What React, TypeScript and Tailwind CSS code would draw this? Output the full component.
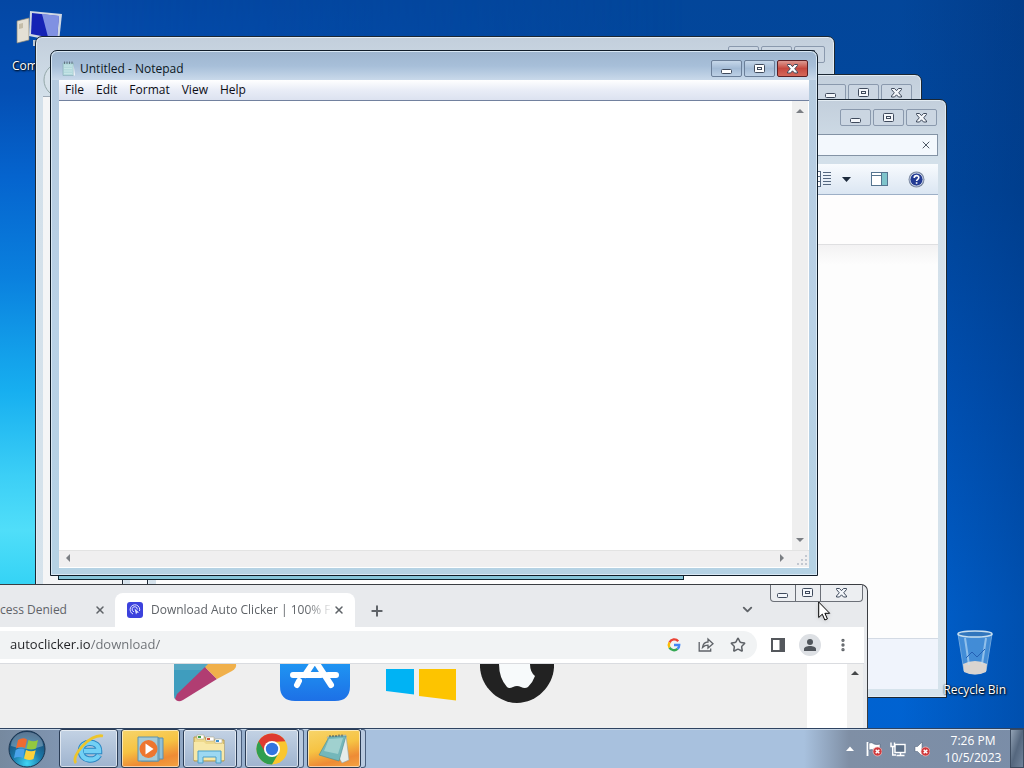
import type { ReactNode } from "react"
import { clsx } from "clsx"
import { ChevronDown, MoreVertical, Plus, Star, X } from "lucide-react"

type CaptionKind = "min" | "max" | "close"

function CaptionGlyph({ kind, white }: { kind: CaptionKind; white?: boolean }) {
  const fill = white ? "#fff" : "#f4f7fb"
  return (
    <svg width="14" height="12" viewBox="0 0 14 12" fill={fill} stroke="#3f4a5c">
      {kind === "min" && <rect x="1.5" y="6.500" width="10" height="4" rx="1" />}
      {kind === "max" && (
        <>
          <rect x="1.5" y="1.500" width="10" height="8" rx="1" />
          <rect x="4.5" y="4.500" width="4" height="2" />
        </>
      )}
      {kind === "close" && (
        <path d="M1.500 1.500h3l2 2.200 2-2.200h3v1L8.700 5.800l2.800 3.200v1h-3l-2-2.200-2 2.200h-3V9l2.800-3.200L1.500 2.500z" />
      )}
    </svg>
  )
}

function CaptionButtons({ active }: { active?: boolean }) {
  const kinds: CaptionKind[] = ["min", "max", "close"]
  const names = { min: "Minimize", max: "Maximize", close: "Close" }
  return (
    <div className="flex gap-0.5">
      {kinds.map((kind) => (
        <button
          key={kind}
          aria-label={names[kind]}
          className={clsx(
            "flex h-[17px] w-[31px] items-center justify-center rounded-[2px] border",
            active && kind === "close"
              ? "border-[#5b1f24] bg-linear-to-b from-[#dc9a93] via-[#c5483f] to-[#d5685a]"
              : active
                ? "border-[#6b7f99] bg-linear-to-b from-[#c6d7e9] via-[#a3bbd6] to-[#bdd0e5]"
                : "border-[#8a99ad] bg-[#cbd6e2]"
          )}
        >
          <CaptionGlyph kind={kind} white={active} />
        </button>
      ))}
    </div>
  )
}

function GlassWindow({ className, children }: { className: string; children?: ReactNode }) {
  return (
    <section
      className={clsx(
        "absolute flex w-[800px] flex-col rounded-t-[7px] border border-[#1b2733] bg-linear-to-b from-[#c3cfdc] via-[#d3e0ea] via-10% to-[#d6e3ec] shadow-[inset_0_0_0_1px_#e3ecf3]",
        className
      )}
    >
      {children}
    </section>
  )
}

function ExplorerWindow() {
  return (
    <GlassWindow className="left-[147px] top-[99px] h-[599px] px-2 pb-2">
      <div className="flex h-[34px] justify-end pt-[9px] pr-px">
        <CaptionButtons />
      </div>
      <div className="flex h-[30px] justify-end">
        <label className="flex h-[22px] w-[240px] items-center border border-[#8393a5] bg-[#f3f8fd] pr-[5px]">
          <input aria-label="Search" className="min-w-0 flex-1 bg-transparent outline-none" />
          <X className="size-3 text-[#4d5865]" strokeWidth={2} />
        </label>
      </div>
      <div className="flex h-[31px] items-center justify-end gap-3 border-b border-[#9dafc6] bg-linear-to-b from-[#f8fbfe] via-[#e9f0f8] to-[#dbe6f2] pr-[13px]">
        <button aria-label="Change your view" className="flex items-center gap-2.5">
          <svg width="20" height="16" viewBox="0 0 20 16" stroke="#55677f" fill="#fff">
            <rect x="1.500" y=".5" width="7" height="5" />
            <rect x="1.500" y="5.500" width="7" height="5" />
            <rect x="1.500" y="10.500" width="7" height="5" />
            <path d="M4 3h2M4 8h2M4 13h2" stroke="#254b98" />
            <path d="M11 1.500h8M11 4.500h8M11 7.500h8M11 10.500h8M11 13.500h8" />
          </svg>
          <svg width="9" height="5" viewBox="0 0 9 5">
            <path d="M0 0h9L4.500 5z" fill="#1d2a3c" />
          </svg>
        </button>
        <button aria-label="Show the preview pane" className="ml-2">
          <svg width="17" height="14" viewBox="0 0 17 14" stroke="#55748f" fill="#fff">
            <rect x=".5" y=".5" width="16" height="13" />
            <path d="M.5 3.500h10" />
            <rect x="10.500" y=".5" width="6" height="13" fill="#7fc4cb" />
          </svg>
        </button>
        <button aria-label="Get help" className="ml-2">
          <svg width="17" height="17" viewBox="0 0 17 17">
            <circle cx="8.500" cy="8.500" r="8" fill="#7d8ba3" />
            <circle cx="8.500" cy="8.500" r="6.500" fill="#233b93" stroke="#c3cde4" />
            <path d="M6.200 7c0-3.200 4.800-3 4.600-.2-.1 1.500-2.200 1.600-2.200 3.200M8.600 11.300v1.500" fill="none" stroke="#fff" strokeWidth="1.600" />
          </svg>
        </button>
      </div>
      <div className="h-[50px] border-b border-[#dfdfe1] bg-[#fefdfd]" />
      <div className="flex-1 bg-linear-to-b from-[#f3f2f3] via-[#fdfdfd] via-5% to-[#fdfdfd]" />
      <div className="h-[51px] border-t border-[#d3dae4] bg-[#f0f4fc]" />
    </GlassWindow>
  )
}

function NotepadIcon() {
  return (
    <svg width="14" height="16" viewBox="0 0 14 16">
      <path d="M1 2h10.500v12.500H1z" fill="#b4dadd" stroke="#86abb5" strokeWidth=".6" />
      <path d="M2 5h8M2 7.500h8M2 10h8M2 12.500h8" stroke="#cfeaea" strokeWidth=".7" />
      <path d="M2.500.5v2.500M5 .5v2.500M7.500.5v2.500M10 .5v2.500" stroke="#53636f" strokeWidth=".8" />
      <path d="M11.500 2.500L13 14.500h-1.500z" fill="#f3f7f8" />
    </svg>
  )
}

function Arrow({ dir }: { dir: "up" | "down" | "left" | "right" }) {
  const paths = { up: "M0 6l4-4 4 4z", down: "M0 2l4 4 4-4z", left: "M6 0v8L2 4z", right: "M2 0v8l4-4z" }
  return (
    <svg width="8" height="8" viewBox="0 0 8 8" fill="#7b7e83">
      <path d={paths[dir]} />
    </svg>
  )
}

function NotepadWindow() {
  const menus = ["File", "Edit", "Format", "View", "Help"]
  return (
    <section className="absolute left-[50px] top-[50px] flex h-[526px] w-[768px] flex-col rounded-t-[7px] border border-[#101c28] bg-linear-to-b from-[#b5cade] via-[#b9d1e6] to-[#b5d2e4] px-2 pb-[7px] shadow-[inset_0_0_0_1px_#d9e8f4]">
      <div className="-mx-[7px] mt-px flex h-7 justify-between rounded-t-[6px] bg-linear-to-b from-[#9fb6cf] via-[#a7bfd9] to-[#c9d9ea] px-[7px]">
        <h1 className="flex items-center gap-1 pt-1.5 pl-[3px] text-xs text-[#0b1722]">
          <NotepadIcon />
          Untitled - Notepad
        </h1>
        <div className="pt-2 pr-px">
          <CaptionButtons active />
        </div>
      </div>
      <nav className="flex h-[21px] items-center border-b border-[#72819f] bg-linear-to-b from-white via-[#e9edf7] via-50% to-[#dce2f0] text-xs text-[#0c0c14]">
        {menus.map((menu) => (
          <button key={menu} className="pr-1.5 pl-1.5">
            {menu}
          </button>
        ))}
      </nav>
      <div className="flex flex-1 bg-white">
        <textarea aria-label="Document text" spellCheck={false} className="flex-1 resize-none bg-white p-1 font-mono text-sm outline-none" />
        <div className="mr-px flex w-4 flex-col items-center justify-between bg-[#efefef] py-1.5">
          <Arrow dir="up" />
          <Arrow dir="down" />
        </div>
      </div>
      <div className="flex h-[18px] items-start justify-between border-t border-b border-t-[#e3e3e3] border-b-white bg-[#f0eff0] pt-[3px] pr-px pl-[5px]">
        <Arrow dir="left" />
        <div className="flex items-start gap-2.5">
          <Arrow dir="right" />
          <svg width="12" height="12" viewBox="0 0 12 12" fill="#c3c8d1">
            <path d="M9 1h2v2H9zM9 5h2v2H9zM9 9h2v2H9zM5 5h2v2H5zM5 9h2v2H5zM1 9h2v2H1z" />
          </svg>
        </div>
      </div>
    </section>
  )
}

function PlayLogo() {
  return (
    <svg width="64" height="38" viewBox="0 0 64 38">
      <path d="M0 0h35L1 35q-1-1-1-4z" fill="#3f9dbe" />
      <path d="M0 0h35l-4 6H0z" fill="#54a7c3" />
      <path d="M31 3l12 12L9 36q-5 3-8-1l2-5z" fill="#b13d72" />
      <path d="M34 0h28q1 4-4 7l-15 8L31 3z" fill="#f0b04b" />
    </svg>
  )
}

function AppStoreLogo() {
  return (
    <svg width="70" height="38" viewBox="0 0 70 38">
      <defs>
        <linearGradient id="store" x1="0" y1="0" x2="0" y2="1">
          <stop offset="0" stopColor="#1f94f2" />
          <stop offset="1" stopColor="#1d70e6" />
        </linearGradient>
      </defs>
      <path d="M0 0h70v22q0 15-15 15H15Q0 37 0 22z" fill="url(#store)" />
      <g stroke="#fff" strokeWidth="6" strokeLinecap="round">
        <path d="M35-4L25 11M19 17l-2 4M36-2l15 23M13 11h28M48 11h8" />
      </g>
    </svg>
  )
}

function ChromeWindow() {
  return (
    <section className="absolute bottom-10 left-0 flex h-36 w-[868px] flex-col rounded-tr-[7px] border-t border-r border-[#3a3d42] bg-[#e8eaed]">
      <div className="flex h-[42px] items-end text-[#5f6368]">
        <div className="flex h-[34px] w-[115px] shrink-0 items-center justify-between overflow-hidden pr-[9px] text-xs">
          <button className="whitespace-nowrap">cess Denied</button>
          <button aria-label="Close tab">
            <X className="size-3" strokeWidth={3} />
          </button>
        </div>
        <div className="flex h-[34px] w-[240px] shrink-0 items-center rounded-t-lg bg-white pr-2.5 pl-3 text-xs">
          <svg width="16" height="16" viewBox="0 0 16 16" fill="none" stroke="#dfe3ff" className="shrink-0">
            <rect width="16" height="16" rx="3" fill="#3c42dd" stroke="none" />
            <path d="M6 12A4.800 4.800 0 1 1 12.500 9M7 9.800A2.600 2.600 0 1 1 10.300 7.500" />
            <path d="M7.500 6.500l4.500 4-2 .2-1 1.800z" fill="#dfe3ff" stroke="none" />
          </svg>
          <button className="ml-2 min-w-0 flex-1 mask-r-from-85% text-left whitespace-nowrap">
            Download Auto Clicker | 100% Fr
          </button>
          <button aria-label="Close tab" className="shrink-0">
            <X className="size-3" strokeWidth={3} />
          </button>
        </div>
        <button aria-label="New tab" className="mb-2 ml-3.5">
          <Plus className="size-4" strokeWidth={3} />
        </button>
        <button aria-label="Search tabs" className="mb-2.5 ml-auto mr-[15px]">
          <ChevronDown className="size-[15px]" strokeWidth={3} />
        </button>
        <div className="mr-1 flex h-[17px] w-[93px] self-start rounded-b-[4px] border border-t-0 border-[#6c7078] bg-[#eceef1]">
          <button aria-label="Minimize" className="flex w-[25px] items-center justify-center border-r border-[#6c7078]">
            <CaptionGlyph kind="min" />
          </button>
          <button aria-label="Maximize" className="flex w-[25px] items-center justify-center border-r border-[#6c7078]">
            <CaptionGlyph kind="max" />
          </button>
          <button aria-label="Close" className="flex flex-1 items-center justify-center">
            <CaptionGlyph kind="close" />
          </button>
        </div>
      </div>
      <div className="mr-[3px] flex h-[37px] items-center border-b border-[#dadce0] bg-white text-[#5f6368]">
        <div className="flex h-7 flex-1 items-center gap-4 rounded-r-full bg-[#f1f3f4] pr-[11px] pl-2.5">
          <input
            aria-label="Address"
            defaultValue="autoclicker.io/download/"
            className="min-w-0 flex-1 bg-[linear-gradient(90deg,#202124_81px,#6b6f74_81px)] bg-clip-text text-[13px] text-transparent outline-none"
          />
          <button aria-label="Search with Google">
            <svg width="16" height="16" viewBox="0 0 16 16" fill="none" strokeWidth="2.400">
              <path d="M12.200 4.200A5.200 5.200 0 0 0 3.500 5.400" stroke="#ea4335" />
              <path d="M3.500 5.400a5.200 5.200 0 0 0 0 5.200" stroke="#fbbc05" />
              <path d="M3.500 10.600a5.200 5.200 0 0 0 8 1.300" stroke="#34a853" />
              <path d="M11.500 11.900A5 5 0 0 0 13.200 8H8" stroke="#4285f4" />
            </svg>
          </button>
          <button aria-label="Share this page">
            <svg width="16" height="16" viewBox="0 0 16 16" fill="none" stroke="currentColor" strokeWidth="1.300">
              <path d="M1.200 5v9h11.500v-2.500M4.500 10.500C5 7 7 5 10 5V2l5 4.700L10 11V8.200C7.500 8.200 6 9 4.500 10.500z" />
            </svg>
          </button>
          <button aria-label="Bookmark this tab">
            <Star className="size-4" strokeWidth={2.300} />
          </button>
        </div>
        <button aria-label="Side panel" className="ml-[14px]">
          <svg width="14" height="14" viewBox="0 0 14 14">
            <rect x="1" y="1" width="12" height="12" fill="none" stroke="#54575c" strokeWidth="2" />
            <path d="M8.500 1H13v12H8.500z" fill="#54575c" />
          </svg>
        </button>
        <button aria-label="You" className="ml-3.5 flex size-[22px] items-center justify-center rounded-full bg-[#dde0e4]">
          <svg width="14" height="14" viewBox="0 0 14 14" fill="#50555b">
            <circle cx="7" cy="4" r="3" />
            <path d="M1 13v-2c0-4 12-4 12 0v2z" />
          </svg>
        </button>
        <button aria-label="Customize and control" className="ml-3.5 mr-[13px]">
          <MoreVertical className="size-4" strokeWidth={3} />
        </button>
      </div>
      <main className="mr-1 flex flex-1 bg-[#efefef]">
        <div className="flex flex-1 items-start pl-[174px]">
          <a href="#android" aria-label="Android">
            <PlayLogo />
          </a>
          <a href="#ios" aria-label="iOS" className="ml-[42px]">
            <AppStoreLogo />
          </a>
          <a href="#windows" aria-label="Windows" className="ml-9">
            <svg width="71" height="38" viewBox="0 0 71 38">
              <path d="M0 5h28v25.500L0 27z" fill="#00b3f4" />
              <path d="M33 5h37v31.500L33 32z" fill="#fdc400" />
            </svg>
          </a>
          <a href="#mac" aria-label="macOS" className="ml-[23px]">
            <svg width="74" height="40" viewBox="0 0 74 40">
              <path d="M0 0h74C75 20 58 39 37 39S-1 20 0 0z" fill="#222" />
              <path d="M19 0h31q0 8 5 12-2 6-7 11-3 2-7 0-4-2-8 0-4 2-6 0Q19 14 19 0z" fill="#f7fafb" />
            </svg>
          </a>
        </div>
        <div className="w-10 bg-white" />
        <div className="flex w-4 justify-center bg-[#f0f0f0] pt-[5px]">
          <svg width="8" height="8" viewBox="0 0 8 8">
            <path d="M0 6l4-4 4 4z" fill="#454749" />
          </svg>
        </div>
      </main>
    </section>
  )
}

function ErrorBadge() {
  return (
    <>
      <circle cx="11.500" cy="10.500" r="4.500" fill="#d0393c" stroke="#f3c6c6" strokeWidth=".7" />
      <path d="M9.700 8.700l3.600 3.600M13.300 8.700l-3.600 3.600" stroke="#fff" strokeWidth="1.500" />
    </>
  )
}

function TaskButton({ label, lit, stacked, children }: { label: string; lit?: boolean; stacked?: boolean; children: ReactNode }) {
  return (
    <div className="flex h-full">
      <button
        aria-label={label}
        className={clsx(
          "flex h-full items-center justify-center rounded-[3px] border border-[#2a3c55] shadow-[inset_0_0_0_1px_#ffffff90]",
          stacked ? "w-[54px]" : "w-[59px]",
          lit ? "bg-[linear-gradient(165deg,#f7d56b_0%,#f6c343_45%,#ee8b35_75%,#f4a341_100%)]" : "bg-linear-to-b from-[#c3d2e4] to-[#9fb4cf]"
        )}
      >
        {children}
      </button>
      {stacked && <div className="w-[5px] rounded-r-[3px] border-y border-r border-[#4a5f7d] bg-[#b9cadf]" />}
    </div>
  )
}

function ChromeLogo() {
  return (
    <svg width="32" height="32" viewBox="0 0 32 32">
      <circle cx="16" cy="16" r="15.500" fill="#f9c62f" />
      <path d="M16 16L2.600 8.200A15.500 15.500 0 0 0 16 31.500l7-12z" fill="#2f9e4f" />
      <path d="M2.600 8.200A15.500 15.500 0 0 1 29.400 8.200L16 9 9.500 19.700z" fill="#de3b30" />
      <circle cx="16" cy="16" r="8" fill="#fff" />
      <circle cx="16" cy="16" r="6.200" fill="#3374e0" />
    </svg>
  )
}

function Taskbar() {
  return (
    <footer className="absolute inset-x-0 bottom-0 flex h-10 items-stretch border-t border-[#2e4361] bg-[linear-gradient(90deg,#76899f_0px,#8095b1_60px,#a8c1de_360px,#a8c1de_calc(100%_-_220px),#7f8fa5_calc(100%_-_175px),#7a8da8_100%)] shadow-[inset_0_1px_0_#c5d5e6]">
      <button aria-label="Start" className="flex w-[59px] items-center pl-2">
        <svg width="38" height="38" viewBox="0 0 38 38">
          <defs>
            <radialGradient id="orb" cx=".5" cy=".9" r=".9">
              <stop offset="0" stopColor="#3fd6f5" />
              <stop offset=".45" stopColor="#1a78a8" />
              <stop offset="1" stopColor="#1c3d63" />
            </radialGradient>
          </defs>
          <circle cx="19" cy="19" r="18" fill="url(#orb)" stroke="#1b3550" />
          <path d="M3 16a16 14 0 0 1 32 0q-16 6-32 0z" fill="#fff" opacity=".28" />
          <path d="M10 10q5-3 9-.5L17 18q-4-2-9 .5z" fill="#ee6b31" />
          <path d="M20.500 10q5 2.500 9.500 0L28 18.500q-5 2-9.500 0z" fill="#93c83f" />
          <path d="M7.700 20q4.500-2.500 9-.5L15 28q-4-2-9 0z" fill="#4aa3ea" />
          <path d="M18 20q5 2.500 9.700.3L25.500 29q-5 2-9.500-.5z" fill="#fbd13b" />
        </svg>
      </button>
      <nav className="flex gap-[3px]">
        <TaskButton label="Internet Explorer">
          <svg width="34" height="32" viewBox="0 0 34 32" fill="none">
            <path d="M27 22c-4 7-18 6-18-4 0-11 18-11 18 0H12" stroke="#2b86c2" strokeWidth="6.500" />
            <path d="M27 22c-4 7-18 6-18-4 0-11 18-11 18 0H12" stroke="#72d0f5" strokeWidth="4.500" />
            <path d="M4 30C-2 24 18 0 31 3" stroke="#edc52c" strokeWidth="2.800" />
          </svg>
        </TaskButton>
        <TaskButton label="Windows Media Player" lit>
          <svg width="28" height="28" viewBox="0 0 28 28">
            <path d="M7 3h19v21H7z" fill="#8fc0d8" stroke="#5c8fae" />
            <path d="M4 3h18v23H4z" fill="#a9d3e6" stroke="#5c8fae" />
            <path d="M1 2h20v24H1z" fill="#a5cbd8" stroke="#5c93ac" />
            <circle cx="11.500" cy="14" r="9" fill="#ee762f" />
            <path d="M8.500 8.500l8 5.500-8 5.500z" fill="#fff" />
          </svg>
        </TaskButton>
        <TaskButton label="Windows Explorer" stacked>
          <svg width="34" height="32" viewBox="0 0 34 32">
            <path d="M1 4h11l1 3h18v21H1z" fill="#eed98c" stroke="#b89c4d" />
            <path d="M4 2h7v4H4zM13 4h8v4h-8zM22 6h7v4h-7z" fill="#fff" stroke="#b4a983" strokeWidth=".6" />
            <path d="M5 3h3v2H5z" fill="#3fa04b" />
            <path d="M14 5h3v2h-3z" fill="#d34e3a" />
            <path d="M23 7h3v2h-3z" fill="#3a91cc" />
            <path d="M1 9h10l2 2h18v16H1z" fill="#f8e8a8" />
            <path d="M5 30V18h23v12h-5v-6H10v6z" fill="#9cd8f2" stroke="#4a9fc8" />
          </svg>
        </TaskButton>
        <TaskButton label="Google Chrome" stacked>
          <ChromeLogo />
        </TaskButton>
        <TaskButton label="Notepad" lit stacked>
          <svg width="34" height="30" viewBox="0 0 34 30">
            <path d="M10 3L29 1l3 25-7 3z" fill="#e5ecea" stroke="#90a3a4" strokeWidth=".6" />
            <path d="M12 3l17-1-7 25-20-6z" fill="#74b7ba" stroke="#4c8c92" strokeWidth=".6" />
            <path d="M12 5l14-1-5 16-14-3z" fill="#b4dcd9" opacity=".7" />
            <path d="M13 3v-2M16 3v-2M19 3v-2M22 2.500v-2M25 2.500v-2" stroke="#3e5459" />
          </svg>
        </TaskButton>
      </nav>
      <div className="ml-auto flex items-center gap-2">
        <button aria-label="Show hidden icons" className="mr-1">
          <svg width="8" height="5" viewBox="0 0 8 5">
            <path d="M0 5l4-4.500L8 5z" fill="#fff" />
          </svg>
        </button>
        <button aria-label="Action Center">
          <svg width="16" height="16" viewBox="0 0 16 16">
            <path d="M1.500 1v14" stroke="#fff" strokeWidth="1.800" />
            <path d="M3 2q3-1 5 1 3 1 6 0v7q-3 1-5.500-.5T3 9z" fill="#fff" stroke="#40516a" strokeWidth=".5" />
            <ErrorBadge />
          </svg>
        </button>
        <button aria-label="Network">
          <svg width="16" height="16" viewBox="0 0 16 16" fill="none" stroke="#fff" strokeWidth="1.400">
            <rect x="5" y="3.500" width="10" height="8" fill="#5d7088" />
            <path d="M6.500 14.500h8M10.500 12v2.500M1 1.500v4h3.500v-4M2.700 5.500V14H6" />
          </svg>
        </button>
        <button aria-label="Volume">
          <svg width="16" height="16" viewBox="0 0 16 16">
            <path d="M1 5.500h2.500L8 1v14l-4.500-4.500H1z" fill="#fff" stroke="#4a5b73" strokeWidth=".5" />
            <ErrorBadge />
          </svg>
        </button>
        <time className="ml-1.5 w-[58px] text-center text-xs leading-[17px] whitespace-nowrap text-white">
          7:26 PM
          <br />
          10/5/2023
        </time>
        <button aria-label="Show desktop" className="h-full w-[14px] border border-[#3d4c60] bg-linear-to-br from-[#93a3b5] via-[#55677e] to-[#71839a]" />
      </div>
    </footer>
  )
}

function DesktopIcon({ label, className, children }: { label: string; className: string; children: ReactNode }) {
  return (
    <a
      href="#open"
      className={clsx("absolute flex flex-col items-center text-xs whitespace-nowrap text-white [text-shadow:1px_1px_2px_#000,0_0_2px_#000]", className)}
    >
      {children}
      <span className="mt-1">{label}</span>
    </a>
  )
}

export default function App() {
  return (
    <div className="relative h-screen w-full overflow-hidden bg-[linear-gradient(180deg,#03469a_0%,#00489f_25%,#0053b8_50%,#0063d2_80%,#0062d0_100%)] font-['Open_Sans','Noto_Sans',sans-serif]">
      <div className="absolute inset-0 bg-[linear-gradient(90deg,transparent_88%,#002a6a55_100%)]" />
      <div className="absolute inset-y-0 left-0 w-2/3 bg-[linear-gradient(180deg,#0447a4_0%,#044fb4_12%,#0564ce_23%,#0a80de_36%,#17aff0_51%,#3ccff6_62%,#50def9_69%,#35d3f5_76%)] mask-r-from-10%" />

      <DesktopIcon label="Computer" className="left-3 top-2.5">
        <svg width="54" height="44" viewBox="0 0 54 44">
          <path d="M4 11l12-3v22L4 33z" fill="#e4e0d5" stroke="#8a8576" strokeWidth=".7" />
          <path d="M6 14l4-1v5l-4 1z" fill="#c4bda9" />
          <path d="M17 1l32 3-3 28-30-6z" fill="#ced7e4" />
          <path d="M19 3l27 3-2 23-26-5z" fill="#1523b5" />
          <path d="M29 4l17 2-2 23-9-2z" fill="#9badee" opacity=".8" />
          <path d="M20 30h10v6H20z" fill="#bcc8d6" />
        </svg>
      </DesktopIcon>
      <GlassWindow className="left-[35px] top-[36px] h-[600px] px-[7px]">
        <div className="flex h-[60px] justify-between border-b border-[#9da9b5] pt-[9px]">
          <svg width="36" height="50" viewBox="0 0 36 50">
            <circle cx="18" cy="34" r="17" fill="#d6e1e9" stroke="#93a7a8" />
          </svg>
          <div className="pr-0.5">
            <CaptionButtons />
          </div>
        </div>
        <div className="flex-1 bg-[#f4f5f6]" />
      </GlassWindow>
      <GlassWindow className="left-[122px] top-[74px] h-[600px] px-[7px]">
        <div className="flex h-[60px] justify-end pt-[9px] pr-0.5">
          <CaptionButtons />
        </div>
        <div className="flex-1 bg-[#f7f9fb]" />
      </GlassWindow>
      <ExplorerWindow />
      <section className="absolute left-[58px] top-[80px] h-[500px] w-[626px] border border-[#0d2430] bg-[#86c5da]" />
      <NotepadWindow />
      <ChromeWindow />
      <Taskbar />

      <DesktopIcon label="Recycle Bin" className="right-[18px] top-8/10 mt-4">
        <svg width="40" height="48" viewBox="0 0 40 48">
          <path d="M3 4l6 37q11 6 22 0l6-37z" fill="#6fb0e8" opacity=".6" stroke="#b5d9f4" />
          <path d="M8 34q12-6 24 0l-1 8q-11 5-22 0z" fill="#d9d4d0" />
          <path d="M10 8l4 27M31 8l-4 26" stroke="#c4e2f8" opacity=".6" strokeWidth="2" />
          <path d="M11 28l6-6 5 5 8-8" stroke="#2460b4" fill="none" />
          <ellipse cx="20" cy="4" rx="17" ry="3" fill="#3176bd" stroke="#c8dfef" strokeWidth="1.500" />
        </svg>
      </DesktopIcon>

      <svg width="14" height="21" viewBox="0 0 14 21" className="absolute left-[818px] top-[601px] drop-shadow-sm">
        <path d="M.7 1v15.500l3.600-3.300 2.500 5.800 2.600-1.100-2.500-5.600h4.800z" fill="#fff" stroke="#000" strokeWidth="1" />
      </svg>
    </div>
  )
}
